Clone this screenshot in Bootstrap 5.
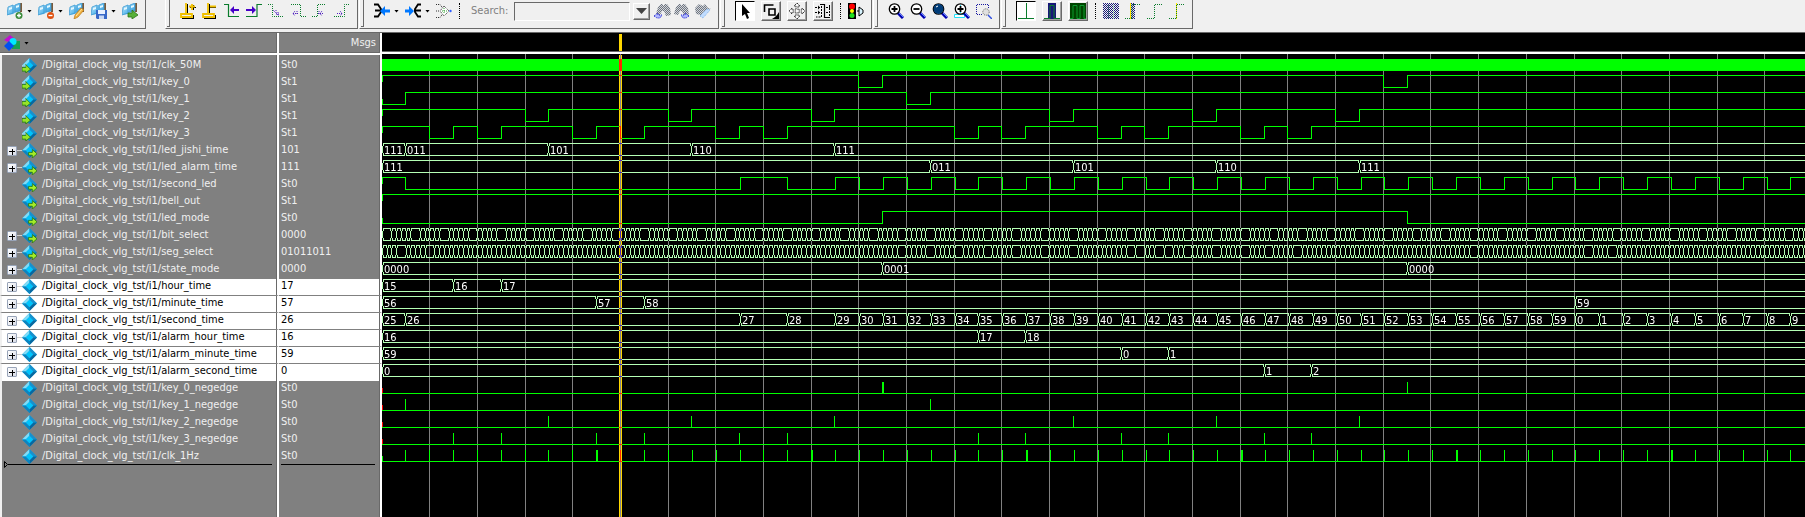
<!DOCTYPE html>
<html lang="en">
<head>
<meta charset="utf-8">
<meta name="viewport" content="width=device-width, initial-scale=1">
<title>Wave - Digital_clock_vlg_tst</title>
<link href="https://cdn.jsdelivr.net/npm/bootstrap@5.3.0/dist/css/bootstrap.min.css" rel="stylesheet">
<style>
  :root { --face: #f0f0f0; --shade: #696969; --pane: #808080; }
  body { background: var(--face); font: 11px/14px "DejaVu Sans Condensed", "DejaVu Sans", sans-serif; color: #000; }
  svg { display: block; }
  .toolstrip { height: 32px; }
  .toolgroup { height: 29px; padding: 0 7px 6px; border-right: 1px solid var(--shade); border-bottom: 1px solid var(--shade); gap: 6px; }
  .gripped { border-left: 1px solid #fff; padding-left: 14px; margin-left: 1px; position: relative; }
  .gripped::before { content: ""; position: absolute; left: 1px; top: 0; width: 3px; height: 27px; border-right: 1px solid var(--shade); border-bottom: 1px solid var(--shade); }
  .first-gap { margin-left: 19px; }
  .tool { border: 0; padding: 0; background: none; display: flex; align-items: center; gap: 4px; height: 20px; color: #000; }
  .raised { width: 20px; height: 20px; justify-content: center; border: 1px solid; border-color: #fff var(--shade) var(--shade) #fff; box-shadow: inset -1px -1px #a0a0a0; }
  .pressed { background: #fff; border-color: #000 #fff #fff #000; box-shadow: none; }
  .caret { width: 5px; height: 3px; background: #000; clip-path: polygon(0 0, 100% 0, 50% 100%); }
  .dots { height: 16px; border-left: 1px dotted #000; margin: 0 1px; }
  .find-label { color: #808080; margin-left: 4px; }
  .find-box { width: 116px; height: 19px; padding: 0 3px; background: var(--face); border: 1px solid; border-color: var(--shade) #fff #fff var(--shade); border-radius: 0; }
  .find-drop { width: 17px; height: 17px; margin-left: -3px; }
  .find-prev { margin-left: -2px; }
  .find-next { margin-left: -5px; }
  .viewer { border-top: 1px solid var(--shade); min-height: 0; }
  .signals { width: 382px; height: 100%; table-layout: fixed; border-collapse: separate; border-spacing: 0; color: var(--face); flex: none; }
  .signals th, .signals td { padding: 0; background: var(--pane); border-right: 2px solid #fff; box-shadow: inset -1px 0 var(--shade); height: 17px; font-weight: 400; white-space: nowrap; vertical-align: top; overflow: hidden; }
  .signals thead th { height: 21px; border-bottom: 2px solid #fff; box-shadow: inset -1px -1px var(--shade); }
  .signals tbody th { border-left: 2px solid var(--face); }
  .signals .spacer th, .signals .spacer td { height: 3px; }
  .signals .filler th, .signals .filler td { height: auto; overflow: visible; }
  .signals td { padding-left: 2px; }
  .signals .picked th, .signals .picked td { background: #fff; color: #000; border-bottom: 1px solid var(--pane); }
  .signals .picked.last-picked th, .signals .picked.last-picked td { border-bottom: 0; }
  .col-names { width: 279px; }
  .col-values { width: 103px; }
  .entry { padding-left: 5px; height: 15px; }
  .twig { width: 15px; height: 17px; }
  .expander { width: 10px; height: 10px; border: 1px solid #98a4b8; border-radius: 1px; background: linear-gradient(135deg, #fff, #d8dce8); padding: 0; display: flex; }
  .stem { width: 5px; height: 1px; background: #d0d0d0; }
  .gem { margin-right: 5px; }
  .insert-line { margin: -5px 5px 0 2px; }
  .insert-line i { height: 1px; background: #000; }
  .value-insert { margin-left: 0; }
  .wave-ruler { height: 21px; background: #000; border-bottom: 2px solid #fff; box-shadow: inset 0 -1px var(--shade); }
  .wave-pane { background: #000; min-width: 0; isolation: isolate; }
  .wave-canvas { min-height: 0; overflow: hidden; }
  .grid-line { stroke: #808080; }
  .grid-line.under-cursor { stroke: #7f558c; }
  .wire { stroke: #0f0; fill: none; }
  .bus { stroke: #b4ffb4; fill: none; }
  .unknown { stroke: #f00; }
  .gap { stroke: #000; }
  .wave-text { fill: #fff; font-size: 11px; }
  .cursor-bar { fill: #ffd700; mix-blend-mode: difference; }
  .wave-pane svg { shape-rendering: crispEdges; }
</style>
<script src="https://cdn.jsdelivr.net/npm/bootstrap@5.3.0/dist/js/bootstrap.bundle.min.js"></script>
</head>
<body class="vh-100 d-flex flex-column overflow-hidden">

<svg width="0" height="0" class="position-absolute" aria-hidden="true">
  <defs>
    <linearGradient id="sky" x1="0" y1="0" x2="1" y2="1"><stop offset="0" stop-color="#d4f2ff"/><stop offset=".6" stop-color="#5bb8ec"/><stop offset="1" stop-color="#2c86c4"/></linearGradient>
    <symbol id="i-flag" viewBox="0 0 16 16">
      <path d="M13 0h2v9h-2z" fill="#7a5a3a"/><path d="M1 4l5-2 2 0 5-2v8l-4 1-3 2-6 1z" fill="url(#sky)"/><path d="M1 4l5-2v8l-6 2zM8 2l5-2v8l-5 1z" fill="none" stroke="#3f9ad2" stroke-width=".8"/><path d="M2 5l3-1v2l-3 1zM9 3l3-1v2l-3 1z" fill="#e4f8ff"/>
    </symbol>
    <symbol id="i-add" viewBox="0 0 16 16"><use href="#i-flag"/><circle cx="12" cy="12.500" r="3.500" fill="#3c8c3c"/><path d="M12 10.500v4M10 12.500h4" stroke="#fff" stroke-width="1.400"/></symbol>
    <symbol id="i-remove" viewBox="0 0 16 16"><use href="#i-flag"/><circle cx="12.500" cy="12.500" r="3.500" fill="#e0500e"/><path d="M10.500 12.500h4" stroke="#fff" stroke-width="1.400"/></symbol>
    <symbol id="i-edit" viewBox="0 0 16 16"><use href="#i-flag"/><path d="M5 16l1-4 6-7 3 2-6 7z" fill="#f0b040" stroke="#b87818" stroke-width=".7"/><path d="M7 13l6-7" stroke="#ffe6a0"/></symbol>
    <symbol id="i-save" viewBox="0 0 16 16"><use href="#i-flag"/><path d="M5 7h11v9H6l-1-1z" fill="#3868c8"/><path d="M7 7h7v4H7z" fill="#e8f0ff"/><path d="M8 12.500h5V16H8z" fill="#c8d8f4"/></symbol>
    <symbol id="i-export" viewBox="0 0 16 16"><use href="#i-flag"/><path d="M6 10h4V7l6 5-6 4v-2H6z" fill="#58b038" stroke="#2c7418" stroke-width=".8"/></symbol>
    <symbol id="i-cursor-add" viewBox="0 0 16 16"><path d="M7.500 1v11M2 15.500h12M13.500 12v4M10 4.500h6M13.500 2v5" stroke="#000" fill="none"/><path d="M6 0v11M1 11h11v3H1zM9 3.500h6M12 1v6" stroke="#f0c000" fill="none" stroke-width="1.800"/></symbol>
    <symbol id="i-cursor-del" viewBox="0 0 16 16"><path d="M7.500 1v11M2 15.500h12M13.500 12v4M8 4.500h6" stroke="#000" fill="none"/><path d="M6 0v11M1 11h11v3H1zM8 3.500h6" stroke="#f0c000" fill="none" stroke-width="1.800"/></symbol>
    <symbol id="i-prev-edge" viewBox="0 0 16 16"><path d="M0 1.500h4.500v12H15" stroke="#0a7c2c" fill="none" stroke-width="1.200"/><path d="M6 7l4-4v3h5v2h-5v3z" fill="#4600c8"/></symbol>
    <symbol id="i-next-edge" viewBox="0 0 16 16"><path d="M0 13.500h11v-12h5" stroke="#0a7c2c" fill="none" stroke-width="1.200"/><path d="M10 7L6 3v3H0v2h6v3z" fill="#4600c8"/></symbol>
    <symbol id="i-fall" viewBox="0 0 16 16"><path d="M0 1.500h4.500v12H16" stroke="#0a7c2c" fill="none" stroke-dasharray="1 1"/><path d="M5 7l3 3 3 3M8 7v4h4M10 9v3" stroke="#5020c0" fill="none" stroke-dasharray="1 1"/></symbol>
    <symbol id="i-fall2" viewBox="0 0 16 16"><path d="M1 1.500h9.500v12H16" stroke="#0a7c2c" fill="none" stroke-dasharray="1 1"/><path d="M3 10.500h6M5 8l-2 2.500L5 13M7 8v4" stroke="#5020c0" fill="none" stroke-dasharray="1 1"/></symbol>
    <symbol id="i-rise" viewBox="0 0 16 16"><path d="M0 13.500h5.500v-12H14" stroke="#0a7c2c" fill="none" stroke-dasharray="1 1"/><path d="M6 10.500h6M10 8l-2 2.500L10 13M7 8v4" stroke="#5020c0" fill="none" stroke-dasharray="1 1"/></symbol>
    <symbol id="i-rise2" viewBox="0 0 16 16"><path d="M0 13.500h10.500v-12H16" stroke="#0a7c2c" fill="none" stroke-dasharray="1 1"/><path d="M3 10.500h6M6 8l2 2.500L6 13" stroke="#5020c0" fill="none" stroke-dasharray="1 1"/></symbol>
    <symbol id="i-drivers" viewBox="0 0 16 16"><path d="M0 1.500h4l3 4.500v3L4 13.500H0M1 7.500h7" stroke="#000" fill="none" stroke-width="1.800"/><path d="M6 8l5-5v3.500h5v3h-5V13z" fill="#0078ff"/></symbol>
    <symbol id="i-readers" viewBox="0 0 16 16"><path d="M16 1.500h-3L10 6v3l3 4.500h3M9 7.500h7" stroke="#000" fill="none" stroke-width="1.800"/><path d="M9 8L4 3v3.500H0v3h4V13z" fill="#0078ff"/></symbol>
    <symbol id="i-expand" viewBox="0 0 16 16"><path d="M0 1.500h4l3 4v5l-3 4H0M0 8h4" stroke="#333" fill="none" stroke-dasharray="1 1"/><path d="M8 3l5 5-5 5-4-5z" stroke="#333" fill="#fff" stroke-dasharray="1 1"/><path d="M8 5v6M6 8h5" stroke="#30a030" stroke-dasharray="1 1"/><circle cx="14.500" cy="8" r="1.200" fill="#3060ff"/></symbol>
    <pattern id="weave" width="2" height="2" patternUnits="userSpaceOnUse"><path d="M0 0h2v2H0z" fill="#d0d4dc"/><path d="M0 0h1v1H0zM1 1h1v1H1z" fill="#70767e"/></pattern>
    <symbol id="i-find" viewBox="0 0 17 16"><path d="M4 4l3-3h2v2l2-2h2l3 4 1 7-5 1-2-5H8l-2 4-4-1z" fill="url(#weave)"/></symbol>
    <symbol id="i-find-prev" viewBox="0 0 17 16"><use href="#i-find"/><path d="M0 13l4-3v2h4l-2 3H3z" fill="#b0b8ff" stroke="#2020d0" stroke-dasharray="1 1"/></symbol>
    <symbol id="i-find-next" viewBox="0 0 17 16"><use href="#i-find"/><path d="M17 13l-4-3v2H9l2 3h3z" fill="#b0b8ff" stroke="#2020d0" stroke-dasharray="1 1"/></symbol>
    <symbol id="i-find-opt" viewBox="0 0 16 16"><path d="M0 5l4-4 4 2 2-2 3 4 3 1-7 2-3 4-5-1z" fill="url(#weave)"/><path d="M5 13l7-7 3 1-7 8z" fill="#c0dcff" stroke="#80b0e8" stroke-dasharray="1 1"/></symbol>
    <symbol id="i-pointer" viewBox="0 0 16 16"><path d="M5 1v12l3-2 2 5 2-1-2-5h3z" fill="#000"/></symbol>
    <symbol id="i-zoomsel" viewBox="0 0 16 16"><path d="M1.500 9v-7h9M6 6h6v6H6z" fill="none" stroke="#000" stroke-width="1.600"/><path d="M16 9v7H9l3-2 2-2z" fill="#000"/></symbol>
    <symbol id="i-pan" viewBox="0 0 16 16"><path d="M8 0l3 3H9v4h4V5l3 3-3 3V9H9v4h2l-3 3-3-3h2V9H3v2L0 8l3-3v2h4V3H5z" fill="#f8f8f8" stroke="#000" stroke-width=".8" stroke-dasharray="1.500 .7"/></symbol>
    <symbol id="i-twocur" viewBox="0 0 16 16"><path d="M5 1.500h4.500v13H15" stroke="#000" fill="none" stroke-width="1.200"/><path d="M6.500 3v11H1M14.500 2v11M0 4.500h5M0 9.500h5M11 4.500h4M11 9.500h4" stroke="#000" fill="none" stroke-dasharray="2 1"/><path d="M3 2.500v4l2-2zM3 7.500v4l2-2z"/></symbol>
    <symbol id="i-light" viewBox="0 0 16 16"><path d="M0 0h8v16H0z"/><circle cx="4" cy="3.500" r="3" fill="#f00"/><circle cx="4" cy="8" r="2" fill="#ff0"/><circle cx="4" cy="12.500" r="2.500" fill="#20e020"/><path d="M9 8h2V4l4 3v3l-4 3V8" fill="#d8f4ff" stroke="#000"/></symbol>
    <symbol id="i-lens" viewBox="0 0 16 16"><path d="M10 10l5 5" stroke="#0000b0" stroke-width="3"/><path d="M11 10l4 4" stroke="#6080ff" stroke-width="1"/><circle cx="6.500" cy="6" r="5.200" fill="#fff" stroke="#000" stroke-width="1.300"/></symbol>
    <symbol id="i-zin" viewBox="0 0 16 16"><use href="#i-lens"/><path d="M6.500 3v6M3.500 6h6" stroke="#000" stroke-width="1.800"/></symbol>
    <symbol id="i-zout" viewBox="0 0 16 16"><use href="#i-lens"/><path d="M3.500 6h6" stroke="#000" stroke-width="1.800"/></symbol>
    <symbol id="i-zfull" viewBox="0 0 16 16"><use href="#i-lens"/><circle cx="6.500" cy="6" r="5" fill="#003c78"/><path d="M4 4l2-1" stroke="#fff"/></symbol>
    <symbol id="i-zcur" viewBox="0 0 16 16"><path d="M.5 11.500h10v3H.5z" fill="#fff" stroke="#20e0f8"/><use href="#i-lens"/><path d="M6.500 2v8" stroke="#20e0f8"/><path d="M6.500 3v6M3.500 6h6" stroke="#000" stroke-width="1.800"/></symbol>
    <symbol id="i-zrange" viewBox="0 0 16 16"><g shape-rendering="crispEdges"><path d="M1 1.500h12M12.500 2v4M.5 2v10M1 11.500h6" fill="none" stroke="#1818a0" stroke-dasharray="1 1"/></g><circle cx="10" cy="9" r="3.200" fill="#e0e0e0" stroke="#606060" stroke-dasharray="1 1"/><path d="M12 12l4 4" stroke="#3050e0" stroke-width="1.500"/></symbol>
    <symbol id="i-edge" viewBox="0 0 16 16"><path d="M0 15.500h16M8.500 0v15" stroke="#0a7c2c"/></symbol>
    <symbol id="i-pulse" viewBox="0 0 16 16"><path d="M4 0h8v16H4z" fill="#181878"/><path d="M0 15.500h6v-13h4v13h6" stroke="#0a7c2c" fill="none"/></symbol>
    <symbol id="i-clocks" viewBox="0 0 16 16"><path d="M0 0h16v16H0z" fill="#004400"/><path d="M0 15.500h3v-13h4v13h3v-13h4v13h2" stroke="#0a9c2c" fill="none"/></symbol>
    <pattern id="hatch" width="2" height="2" patternUnits="userSpaceOnUse"><path d="M0 0h1v1H0zM1 1h1v1H1z" fill="#181878"/></pattern>
    <symbol id="i-block" viewBox="0 0 16 16"><path d="M0 0h16v16H0z" fill="url(#hatch)"/><path d="M5.500 2v13M10.500 2v13" stroke="#60a080" stroke-dasharray="1 1"/></symbol>
    <symbol id="i-blockedge" viewBox="0 0 16 16"><path d="M5 0h5v16H5z" fill="url(#hatch)"/><path d="M5.500 0v16" stroke="#ffe800"/><path d="M0 15.500h7v-14h8" stroke="#0a7c2c" fill="none" stroke-dasharray="1 1"/></symbol>
    <symbol id="i-step" viewBox="0 0 16 16"><path d="M0 15.500h7.500v-14H15" stroke="#0a7c2c" fill="none" stroke-dasharray="1 1"/></symbol>
    <symbol id="i-stepy" viewBox="0 0 16 16"><path d="M7.500 0v16" stroke="#ffe800"/><use href="#i-step"/></symbol>
    <symbol id="i-gem" viewBox="0 0 16 16"><path d="M8 0l8 8-8 8-8-8z" fill="#18a0d8"/><path d="M8 0v4L4 8H0z" fill="#80dcf8"/><path d="M8 0l8 8h-4L8 4z" fill="#1890cc"/><path d="M8 16V12l4-4h4z" fill="#0868a0"/><path d="M8 16l-8-8h4l4 4z" fill="#0c84c0"/><path d="M8 4l4 4-4 4-4-4z" fill="#00c4fc"/></symbol>
    <symbol id="i-gem-in" viewBox="0 0 16 16"><use href="#i-gem"/><path d="M0 10h4V7l5 5-5 4v-2H0z" fill="#96e428" stroke="#1c7010" stroke-width=".8"/><path d="M0 8.500h4" stroke="#fff"/></symbol>
    <symbol id="i-gem-out" viewBox="0 0 16 16"><use href="#i-gem"/><path d="M7 10h4V7l5 4.500-5 4.500v-3H7z" fill="#a4ec28" stroke="#1c7010" stroke-width=".8"/></symbol>
    <symbol id="i-shapes" viewBox="0 0 16 16"><path d="M8 6h8v8H8z" fill="#18a050"/><path d="M0 5l6-5 5 4-7 3z" fill="#c010d0"/><circle cx="9" cy="6.500" r="3.500" fill="#00e8ff"/><path d="M5 6l5 5-5 5-5-5z" fill="#0050f0"/></symbol>
  </defs>
</svg>

<header class="toolstrip d-flex flex-shrink-0" id="toolstrip"></header>

<main class="viewer d-flex flex-grow-1">
  <table class="signals">
    <colgroup><col class="col-names"><col class="col-values"></colgroup>
    <thead>
      <tr>
        <th scope="col"><button type="button" class="tool ms-1" aria-label="Signal filter"><svg width="16" height="16"><use href="#i-shapes"/></svg><span class="caret"></span></button></th>
        <th scope="col" class="text-end pe-1"><div class="pt-1 lh-1">Msgs</div></th>
      </tr>
    </thead>
    <tbody id="signal-rows"></tbody>
  </table>
  <section class="wave-pane d-flex flex-column flex-grow-1" aria-label="Waveforms">
    <div class="wave-ruler"><svg width="100%" height="18"><rect class="cursor-bar" x="237" y="1" width="3" height="17"/></svg></div>
    <div class="wave-canvas flex-grow-1"><svg id="waves" width="100%" height="100%"></svg></div>
  </section>
</main>

<script>
// ---- toolbar -------------------------------------------------------------
const tool = (icon, label, o = {}) =>
  `<button type="button" class="tool ${o.cls || ''}" aria-label="${label}"><svg width="${o.w || 16}" height="16"><use href="#i-${icon}"/></svg>${o.menu ? '<span class="caret"></span>' : ''}</button>`;
const box = (icon, label, cls = '') => tool(icon, label, { cls: 'raised ' + cls });
const dots = '<span class="dots"></span>';
const groups = [
  tool('add', 'Add', { menu: 1 }) + tool('remove', 'Remove', { menu: 1 }) + tool('edit', 'Edit') + tool('save', 'Save', { menu: 1 }) + tool('export', 'Export'),
  tool('cursor-add', 'Insert cursor') + tool('cursor-del', 'Delete cursor') + tool('prev-edge', 'Previous transition') + tool('next-edge', 'Next transition') +
    tool('fall', 'Previous falling edge') + tool('fall2', 'Next falling edge') + tool('rise', 'Previous rising edge') + tool('rise2', 'Next rising edge'),
  tool('drivers', 'Show drivers', { menu: 1 }) + tool('readers', 'Show readers', { menu: 1 }) + tool('expand', 'Expand net') + dots +
    '<label class="find-label" for="find">Search:</label><input id="find" class="find-box" type="text">' +
    '<button type="button" class="tool raised find-drop" aria-label="Search history"><svg width="11" height="6"><path d="M0 0h11L5.500 6z" fill="#444"/></svg></button>' +
    tool('find-prev', 'Find previous', { w: 17, cls: 'find-prev' }) + tool('find-next', 'Find next', { w: 17, cls: 'find-next' }) + tool('find-opt', 'Search options'),
  box('pointer', 'Select', 'pressed') + box('zoomsel', 'Zoom mode') + box('pan', 'Pan mode') + box('twocur', 'Two cursor mode') + dots + tool('light', 'Stop drawing'),
  ['zin', 'zout', 'zfull', 'zcur', 'zrange'].map((n, i) => tool(n, ['Zoom in', 'Zoom out', 'Zoom full', 'Zoom on cursor', 'Zoom range'][i])).join(''),
  box('edge', 'Edge view', 'pressed') + box('pulse', 'Pulse view') + box('clocks', 'Clock view') + dots +
    tool('block', 'Block') + tool('blockedge', 'Block edge') + tool('step', 'Step') + tool('stepy', 'Step at cursor')
];
document.getElementById('toolstrip').innerHTML = groups.map((g, i) =>
  `<div class="toolgroup d-flex align-items-center flex-shrink-0 ${i ? 'gripped' : ''} ${i === 1 ? 'first-gap' : ''}" role="toolbar">${g}</div>`).join('');

// ---- signals -------------------------------------------------------------
// Key events fall on a half-division clock; the design's own 1 Hz clock runs slightly slower.
const half = u => Math.round(-0.48 + 23.84 * u);
const tick = k => Math.floor(23.7 + 23.883 * k);
const lows = (...starts) => starts.flatMap(s => [half(s), half(s + 1)]);
const at = (...pairs) => pairs.map(([u, t]) => [u ? half(u) : 0, t]);

const seconds = [[0, 25], [tick(0), 26], [tick(14), 27], [tick(16), 28]];
for (let k = 18; k < 59; k++) seconds.push([tick(k), (k + 11) % 60]);

const scan = (skip) => {
  const out = [];
  for (let n = -1; n < 300; n++) if (!skip(n)) out.push([Math.round(9.3 + 4.768 * n), '']);
  return out;
};
const blanks = new Set([18.6, 47.3, 519.7, 548, 577, 605, 633, 662, 691, 750, 756, 779, 785, 806, 835, 863, 887, 916, 1092, 1206, 1230]
  .map(x => Math.round((x - 9.3) / 4.768)));

const signals = [
  ['clk_50M', 'St0', 'in', { solid: 1 }],
  ['key_0', 'St1', 'in', { high: 1, flips: lows(20, 42) }],
  ['key_1', 'St1', 'in', { high: 0, flips: [half(1), ...lows(22)] }],
  ['key_2', 'St1', 'in', { high: 1, flips: lows(6, 12, 18, 28, 34, 40) }],
  ['key_3', 'St1', 'in', { high: 1, flips: lows(2, 4, 8, 10, 14, 16, 24, 26, 30, 32, 36, 38) }],
  ['led_jishi_time', '101', 'out', { bus: at([0, '111'], [1, '011'], [7, '101'], [13, '110'], [19, '111']) }],
  ['led_alarm_time', '111', 'out', { bus: at([0, '111'], [23, '011'], [29, '101'], [35, '110'], [41, '111']) }],
  ['second_led', 'St0', 'out', { high: 1, flips: seconds.slice(1).map(s => s[0]) }],
  ['bell_out', 'St1', 'out', { high: 1, flips: [] }],
  ['led_mode', 'St0', 'out', { high: 0, flips: [half(21), half(43)] }],
  ['bit_select', '0000', 'out', { bus: [[0, ''], ...scan(n => n < 0 || n % 6 === 5)] }],
  ['seg_select', '01011011', 'out', { bus: [[0, ''], ...scan(n => blanks.has(n))] }],
  ['state_mode', '0000', '', { bus: at([0, '0000'], [21, '0001'], [43, '0000']) }],
  ['hour_time', '17', '', { bus: at([0, 15], [3, 16], [5, 17]) }],
  ['minute_time', '57', '', { bus: [...at([0, 56], [9, 57], [11, 58]), [tick(49), 59]] }],
  ['second_time', '26', '', { bus: seconds }],
  ['alarm_hour_time', '16', '', { bus: at([0, 16], [25, 17], [27, 18]) }],
  ['alarm_minute_time', '59', '', { bus: at([0, 59], [31, 0], [33, 1]) }],
  ['alarm_second_time', '0', '', { bus: at([0, 0], [37, 1], [39, 2]) }],
  ['key_0_negedge', 'St0', '', { pulses: [21, 43].map(half), wide: [0] }],
  ['key_1_negedge', 'St0', '', { pulses: [1, 23].map(half) }],
  ['key_2_negedge', 'St0', '', { pulses: [7, 13, 19, 29, 35, 41].map(half) }],
  ['key_3_negedge', 'St0', '', { pulses: [3, 5, 9, 11, 15, 17, 25, 27, 31, 33, 37, 39].map(half) }],
  ['clk_1Hz', 'St0', '', { pulses: Array.from({ length: 60 }, (_, k) => tick(k)), wide: [8, 17, 26, 35, 44, 53], known: 1 }]
];

// ---- name and value columns ----------------------------------------------
const expander = '<span class="twig d-flex align-items-center"><button type="button" class="expander" aria-label="Expand"><svg width="8" height="8"><path d="M1 4.500h6M4 1.500v6" stroke="#000" shape-rendering="crispEdges"/></svg></button><span class="stem"></span></span>';
document.getElementById('signal-rows').innerHTML =
  '<tr class="spacer"><th></th><td></td></tr>' +
  signals.map(([name, value, dir, w], i) => {
    const icon = dir ? 'gem-' + dir : 'gem';
    const cls = i >= 13 && i <= 18 ? 'picked' + (i === 18 ? ' last-picked' : '') : '';
    return `<tr class="${cls}"><th scope="row"><div class="entry d-flex align-items-center">${w.bus ? expander : '<span class="twig"></span>'}<svg class="gem flex-shrink-0" width="15" height="15"><use href="#i-${icon}"/></svg><span class="align-self-start">/Digital_clock_vlg_tst/i1/${name}</span></div></th><td>${value}</td></tr>`;
  }).join('') +
  '<tr class="filler"><th><div class="insert-line d-flex align-items-center"><svg width="4" height="7"><path d="M.5 .5v6l3-3z" fill="none" stroke="#000"/></svg><i class="flex-grow-1"></i></div></th>' +
  '<td><div class="insert-line value-insert d-flex align-items-center"><svg width="0" height="7"></svg><i class="flex-grow-1"></i></div></td></tr>';

// ---- waveforms -----------------------------------------------------------
const END = 4000, HI = 1.5, LO = 13.5, CURSOR = 10;
let svg = '';
for (let u = 2; u < 160; u += 2) svg += `<path class="grid-line${u === CURSOR ? ' under-cursor' : ''}" d="M${half(u) + 0.5} 0V4000"/>`;
signals.forEach(([, , , w], i) => {
  let d = '', body = '';
  if (w.solid) body = `<rect x="0" y="2" width="${END}" height="12" fill="#0f0"/>`;
  else if (w.flips) {
    let level = w.high;
    d = `M.5 ${level ? 2 : 8}v6M0 ${level ? HI : LO}`;
    for (const x of w.flips) { level = !level; d += `H${x + 0.5}V${level ? HI : LO}`; }
    body = `<path class="wire" d="${d}H${END}"/>`;
  } else if (w.bus) {
    let cut = '', words = '';
    d = `M0 ${HI}H${END}M0 ${LO}H${END}`;
    for (const [x, t] of w.bus) {
      cut += `M${x + 0.5} 1v1M${x + 0.5} 13v1`;
      d += `M${x - 0.5} 1v3M${x + 1.5} 1v3M${x + 0.5} 4v7M${x - 0.5} 11v3M${x + 1.5} 11v3`;
      if (t !== '') words += `<text class="wave-text" x="${x + 2}" y="12">${t}</text>`;
    }
    body = `<path class="bus" d="${d}"/><path class="gap" d="${cut}"/>${words}`;
  } else {
    d = `M0 ${LO}H${END}`;
    w.pulses.forEach((x, k) => {
      d += `M${x + 0.5} 2V14`;
      if (w.wide && w.wide.includes(k)) d += `M${x + 1.5} 2V14`;
    });
    body = `<path class="wire" d="${d}"/><path class="${w.known ? 'wire' : 'unknown'}" d="M.5 8v5"/>`;
  }
  svg += `<g transform="translate(0 ${3 + 17 * i})">${body}</g>`;
});
svg += '<rect class="cursor-bar" x="237" y="1" width="3" height="4000"/>';
document.getElementById('waves').innerHTML = svg;
</script>
</body>
</html>
